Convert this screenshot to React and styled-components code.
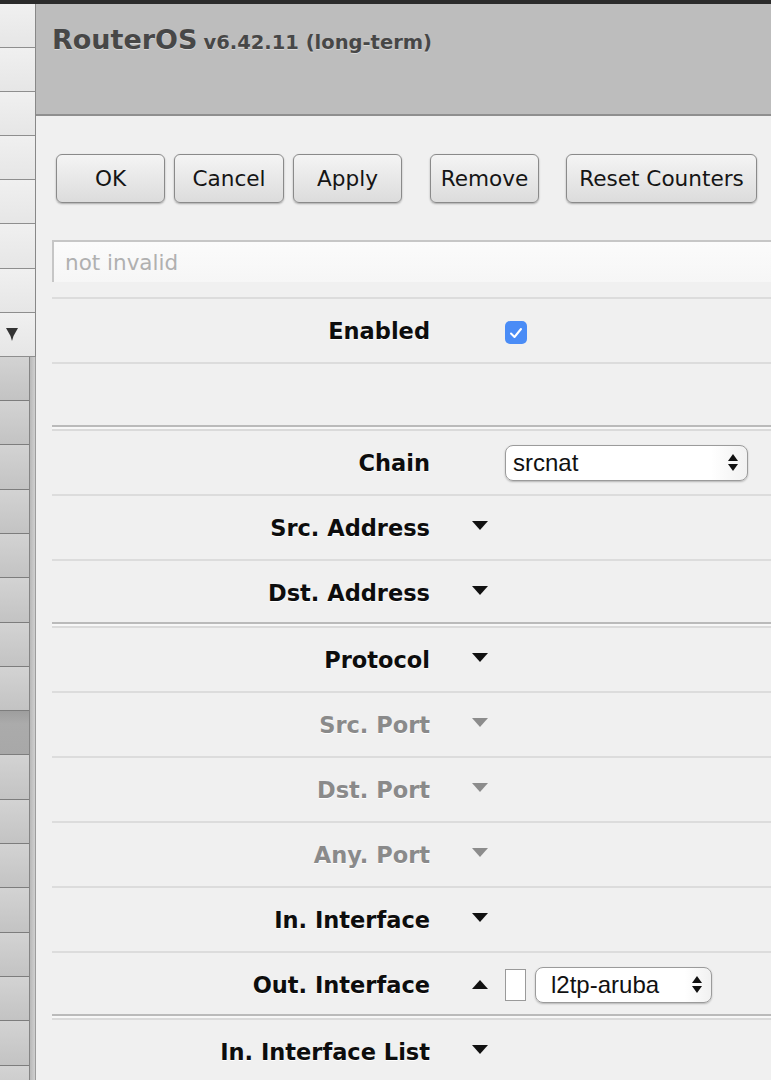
import React from 'react'
import styled, { createGlobalStyle } from 'styled-components'

const GlobalStyle = createGlobalStyle`
  html, body {
    margin: 0;
    padding: 0;
    background: #f0f0f0;
    overflow: hidden;
  }
`

const Page = styled.div`
  width: 771px;
  height: 1080px;
  display: flex;
  flex-direction: column;
  overflow: hidden;
  font-family: "DejaVu Sans", Verdana, sans-serif;
`

const TopBar = styled.div`
  height: 4px;
  background: #2b2b2b;
  flex-shrink: 0;
`

const Body = styled.div`
  flex: 1;
  display: flex;
  min-height: 0;
`

const Sidebar = styled.div`
  width: 36px;
  flex-shrink: 0;
  display: flex;
  flex-direction: column;
  overflow: hidden;
`

const MenuCell = styled.div`
  height: 44.1px;
  flex-shrink: 0;
  box-sizing: border-box;
  background: linear-gradient(#f0f0f0, #e6e6e6);
  border-bottom: 1px solid #8e8e8e;
  border-right: 1px solid #888;
  display: flex;
  align-items: center;
  padding-left: 6px;
`

const SideLower = styled.div`
  flex: 1;
  display: flex;
  min-height: 0;
`

const TabColumn = styled.div`
  width: 30px;
  display: flex;
  flex-direction: column;
  border-right: 1px solid #858585;
  box-sizing: border-box;
  overflow: hidden;
`

const TabCell = styled.div`
  height: 44.3px;
  flex-shrink: 0;
  box-sizing: border-box;
  border-bottom: 1px solid #7d7d7d;
  background: ${p => p.$active
    ? 'linear-gradient(#9e9e9e, #ababab 30%, #a8a8a8)'
    : 'linear-gradient(#d3d3d3, #c3c3c3)'};
`

const ScrollStrip = styled.div`
  width: 6px;
  background: linear-gradient(90deg, #b8b8b8, #cfcfcf);
  border-right: 1px solid #9c9c9c;
  box-sizing: border-box;
`

const Main = styled.div`
  flex: 1;
  display: flex;
  flex-direction: column;
  min-width: 0;
  background: #f0f0f0;
`

const Header = styled.div`
  height: 112px;
  box-sizing: border-box;
  background: #bdbdbd;
  border-bottom: 2px solid #8f8f8f;
  padding: 18px 0 0 16px;
  flex-shrink: 0;
`

const Title = styled.div`
  color: #474747;
  font-weight: bold;
  font-size: 27px;
  line-height: 36px;
  text-shadow: 0 1px 0 #d8d8d8;
  white-space: nowrap;
`

const Version = styled.span`
  font-size: 19.5px;
  margin-left: 6px;
`

const Toolbar = styled.div`
  display: flex;
  padding: 38px 0 0 20px;
  flex-shrink: 0;
`

const Button = styled.div`
  height: 49px;
  width: ${p => p.$w}px;
  flex-shrink: 0;
  box-sizing: border-box;
  margin-left: ${p => p.$gap}px;
  display: flex;
  align-items: center;
  justify-content: center;
  border: 1.5px solid #8a8a8a;
  border-radius: 6px;
  background: linear-gradient(#f4f4f4, #dcdcdc);
  box-shadow: 0 1px 2px rgba(0, 0, 0, 0.3);
  color: #151515;
  font-size: 21.6px;
  white-space: nowrap;
`

const FilterWrap = styled.div`
  padding: 37px 0 15px 16px;
  flex-shrink: 0;
`

const Filter = styled.div`
  height: 42px;
  box-sizing: border-box;
  border-top: 2px solid #c6c6c6;
  border-left: 2px solid #c6c6c6;
  background: linear-gradient(#fbfbfb, #f6f6f6);
  display: flex;
  align-items: center;
  padding-left: 11px;
  color: #b0b0b0;
  font-size: 21.5px;
`

const Rows = styled.div`
  margin-left: 16px;
  display: flex;
  flex-direction: column;
`

const Row = styled.div`
  height: ${p => (p.$group ? 69 : 65)}px;
  margin-top: ${p => (p.$group ? -2 : 0)}px;
  flex-shrink: 0;
  box-sizing: border-box;
  display: flex;
  align-items: center;
  border-top: 2px solid ${p => (p.$group ? '#bababa' : '#dcdcdc')};
  padding-top: ${p => (p.$group ? 4 : 0)}px;
  box-shadow: ${p => (p.$group ? 'inset 0 2px 0 #f7f7f7, inset 0 4px 0 #dadada' : 'none')};
`

const Label = styled.div`
  width: 378px;
  flex-shrink: 0;
  text-align: right;
  font-weight: bold;
  font-size: 22.5px;
  color: ${p => (p.$disabled ? '#8a8a8a' : '#0d0d0d')};
  text-shadow: 0 1px 0 #fff;
  white-space: nowrap;
`

const ToggleSlot = styled.div`
  width: 75px;
  flex-shrink: 0;
  box-sizing: border-box;
  padding-left: 42px;
  display: flex;
  align-items: center;
`

const Arrow = styled.div`
  width: 0;
  height: 0;
  border-left: 8px solid transparent;
  border-right: 8px solid transparent;
  ${p => (p.$up ? 'border-bottom' : 'border-top')}: 9px solid ${p => (p.$disabled ? '#8c8c8c' : '#111')};
  margin-top: ${p => (p.$up ? 0 : -4)}px;
`

const Value = styled.div`
  display: flex;
  align-items: center;
  gap: 9px;
`

const Checkbox = styled.div`
  width: 22px;
  height: 23px;
  border-radius: 5px;
  background: #4a8cf6;
  display: flex;
  align-items: center;
  justify-content: center;
  margin-top: 4px;
`

const NotBox = styled.div`
  width: 21px;
  height: 32px;
  box-sizing: border-box;
  background: #fff;
  border: 1px solid #9a9a9a;
`

const Select = styled.div`
  width: ${p => p.$width}px;
  height: 36px;
  box-sizing: border-box;
  border: 1px solid #9b9b9b;
  border-radius: 8px;
  background: linear-gradient(90deg, #fff 85%, #f1f1f1);
  box-shadow: 0 1px 2px rgba(0, 0, 0, 0.25);
  display: flex;
  align-items: center;
  justify-content: space-between;
  padding: 0 9px 0 ${p => p.$pad}px;
  font-family: "Liberation Sans", Arial, sans-serif;
  font-size: 24px;
  color: #111;
`

const Spinner = styled.div`
  display: flex;
  flex-direction: column;
  gap: 3px;
  &::before, &::after {
    content: '';
    width: 0;
    height: 0;
    border-left: 5px solid transparent;
    border-right: 5px solid transparent;
  }
  &::before { border-bottom: 7px solid #111; }
  &::after { border-top: 7px solid #111; }
`

const menuCells = Array.from({ length: 7 })
const tabCells = Array.from({ length: 17 })

const buttons = [
  { text: 'OK', w: 109, gap: 0 },
  { text: 'Cancel', w: 110, gap: 9 },
  { text: 'Apply', w: 109, gap: 9 },
  { text: 'Remove', w: 109, gap: 28 },
  { text: 'Reset Counters', w: 191, gap: 27 },
]

const rows = [
  { label: 'Enabled', check: true },
  { label: '' },
  { label: 'Chain', select: 'srcnat', group: true },
  { label: 'Src. Address', toggle: true },
  { label: 'Dst. Address', toggle: true },
  { label: 'Protocol', toggle: true, group: true },
  { label: 'Src. Port', toggle: true, disabled: true },
  { label: 'Dst. Port', toggle: true, disabled: true },
  { label: 'Any. Port', toggle: true, disabled: true },
  { label: 'In. Interface', toggle: true },
  { label: 'Out. Interface', open: true },
  { label: 'In. Interface List', toggle: true, group: true },
]

function FieldRow({ row }) {
  return (
    <Row $group={row.group}>
      <Label $disabled={row.disabled}>{row.label}</Label>
      <ToggleSlot>
        {row.toggle && <Arrow $disabled={row.disabled} />}
        {row.open && <Arrow $up />}
      </ToggleSlot>
      <Value>
        {row.check && (
          <Checkbox>
            <svg width="14" height="12" viewBox="0 0 14 12">
              <path d="M2 6.5 L5.5 10 L12 2" fill="none" stroke="#fff" strokeWidth="2" strokeLinecap="round" strokeLinejoin="round" />
            </svg>
          </Checkbox>
        )}
        {row.select && (
          <Select $width={243} $pad={7}>
            {row.select}
            <Spinner />
          </Select>
        )}
        {row.open && (
          <>
            <NotBox />
            <Select $width={177} $pad={15}>
              l2tp-aruba
              <Spinner />
            </Select>
          </>
        )}
      </Value>
    </Row>
  )
}

export default function App() {
  return (
    <Page>
      <GlobalStyle />
      <TopBar />
      <Body>
        <Sidebar>
          {menuCells.map((_, i) => <MenuCell key={i} />)}
          <MenuCell>
            <svg width="12" height="13" viewBox="0 0 12 13">
              <path d="M0 0 H12 L7.5 8 L6 13 L4.5 8 Z" fill="#333" />
            </svg>
          </MenuCell>
          <SideLower>
            <TabColumn>
              {tabCells.map((_, i) => <TabCell key={i} $active={i === 8} />)}
            </TabColumn>
            <ScrollStrip />
          </SideLower>
        </Sidebar>
        <Main>
          <Header>
            <Title>
              RouterOS<Version>v6.42.11 (long-term)</Version>
            </Title>
          </Header>
          <Toolbar>
            {buttons.map(b => (
              <Button key={b.text} $w={b.w} $gap={b.gap}>{b.text}</Button>
            ))}
          </Toolbar>
          <FilterWrap>
            <Filter>not invalid</Filter>
          </FilterWrap>
          <Rows>
            {rows.map((row, i) => <FieldRow key={i} row={row} />)}
          </Rows>
        </Main>
      </Body>
    </Page>
  )
}
